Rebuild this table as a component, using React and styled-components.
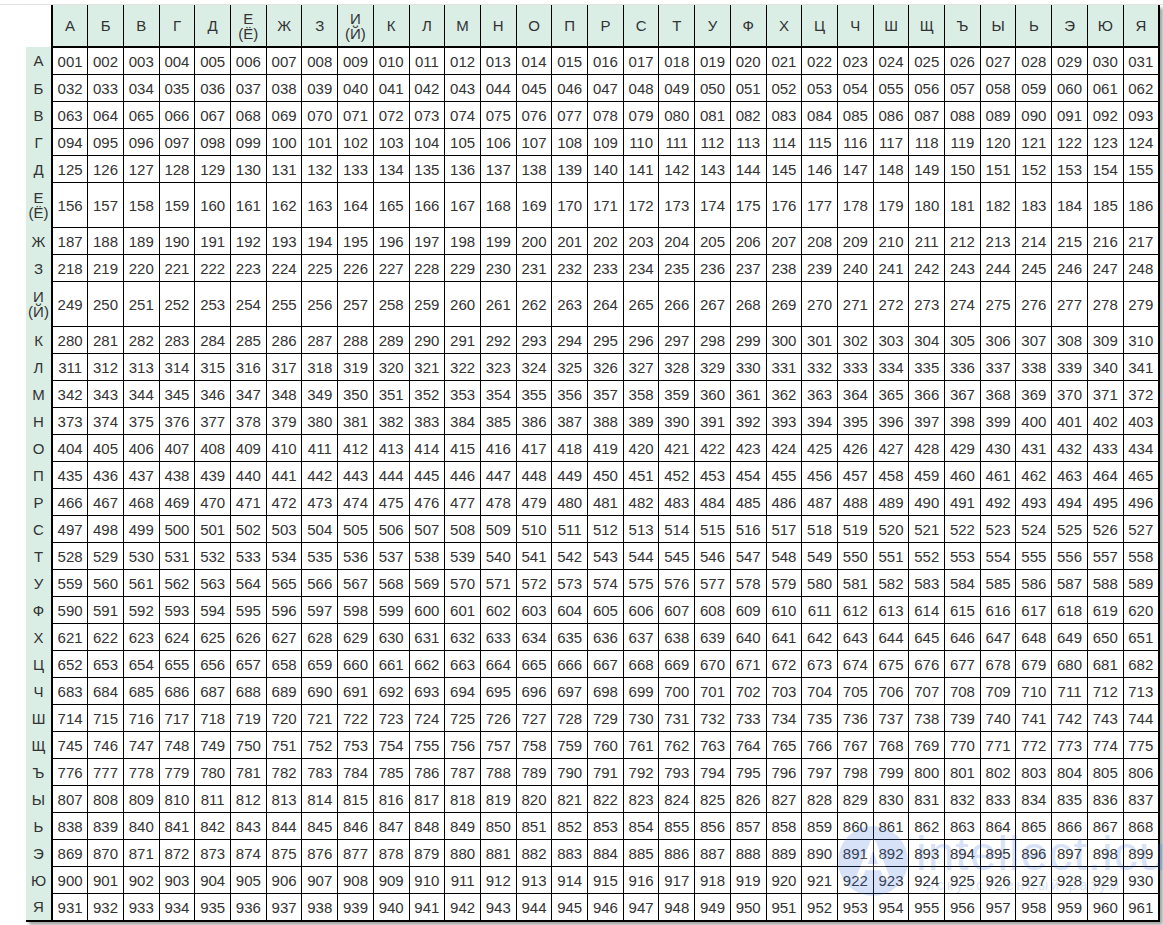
import React from 'react';
import styled, { createGlobalStyle } from 'styled-components';

const letters = ['А', 'Б', 'В', 'Г', 'Д', 'Е\n(Ё)', 'Ж', 'З', 'И\n(Й)', 'К', 'Л', 'М', 'Н', 'О', 'П', 'Р', 'С', 'Т', 'У', 'Ф', 'Х', 'Ц', 'Ч', 'Ш', 'Щ', 'Ъ', 'Ы', 'Ь', 'Э', 'Ю', 'Я'];

const GlobalStyle = createGlobalStyle`
  body {
    margin: 0;
    background: #fff;
    font-family: "Liberation Sans", Arial, sans-serif;
  }
`;

const Page = styled.div`
  position: relative;
  padding-top: 4px;
  width: 1163px;
  height: 925px;
  overflow: hidden;
`;

const Frame = styled.div`
  border-top: 1px solid #e2e2e2;
  padding-left: 26px;
`;

const Table = styled.table`
  border-collapse: collapse;
  table-layout: fixed;
  width: 1134px;
  box-shadow: 3px 3px 3px rgba(0, 0, 0, 0.35);
  color: #333;
  font-size: 15px;
`;

const HeadCell = styled.th`
  font-weight: normal;
  height: 41px;
  padding: 0;
  background: #daeee6;
  border-left: 1px solid #000;
  border-right: ${(p) => (p.$last ? '2px' : '1px')} solid #000;
  border-bottom: 2px solid #000;
  line-height: 15px;
  white-space: pre-line;
  text-align: center;
`;

const Corner = styled.th`
  width: 25px;
  padding: 0;
  background: #fff;
  border-right: 2px solid #000;
`;

const RowHead = styled.th`
  font-weight: normal;
  padding: 0;
  background: #daeee6;
  border-right: 2px solid #000;
  border-bottom: ${(p) => (p.$last ? '2px solid #000' : 'none')};
  line-height: 15px;
  white-space: pre-line;
  text-align: center;
`;

const Cell = styled.td`
  padding: 0;
  height: ${(p) => (p.$tall ? '44px' : '26px')};
  border: 1px solid #000;
  border-right-width: ${(p) => (p.$lastCol ? '2px' : '1px')};
  border-bottom-width: ${(p) => (p.$lastRow ? '2px' : '1px')};
  text-align: center;
  vertical-align: middle;
`;

const Watermark = styled.div`
  position: absolute;
  left: 836px;
  top: 824px;
  display: flex;
  align-items: center;
  gap: 6px;
  pointer-events: none;
  opacity: 0.2;
  color: #3b6fd8;
`;

const WmText = styled.div`
  display: flex;
  flex-direction: column;
  line-height: 1;
`;

const WmTitle = styled.span`
  font-family: "Liberation Sans", Arial, sans-serif;
  font-size: 48px;
  letter-spacing: 1px;
`;

const WmSub = styled.span`
  font-family: "Liberation Sans", Arial, sans-serif;
  font-size: 14px;
  letter-spacing: 3px;
  padding-left: 10px;
`;

const pad = (n) => String(n).padStart(3, '0');

export default function App() {
  return (
    <Page>
      <GlobalStyle />
      <Frame>
        <Table>
          <colgroup>
            <col style={{ width: 26 }} />
            {letters.map((l, i) => <col key={i} />)}
          </colgroup>
          <thead>
            <tr>
              <Corner />
              {letters.map((l, i) => (
                <HeadCell key={i} $last={i === letters.length - 1}>{l}</HeadCell>
              ))}
            </tr>
          </thead>
          <tbody>
            {letters.map((rowL, r) => {
              const tall = rowL.includes('\n');
              const lastRow = r === letters.length - 1;
              return (
                <tr key={r}>
                  <RowHead $last={lastRow}>{rowL}</RowHead>
                  {letters.map((c, j) => (
                    <Cell key={j} $tall={tall} $lastRow={lastRow} $lastCol={j === letters.length - 1}>
                      {pad(r * 31 + j + 1)}
                    </Cell>
                  ))}
                </tr>
              );
            })}
          </tbody>
        </Table>
      </Frame>
      <Watermark>
        <svg width="74" height="74" viewBox="0 0 72 72">
          <circle cx="36" cy="36" r="34" fill="#3b6fd8" />
          <path d="M22 54 L36 18 L50 54 M28 42 L44 42" stroke="#fff" strokeWidth="6" fill="none" strokeLinejoin="round" />
        </svg>
        <WmText>
          <WmTitle>intellect.icu</WmTitle>
          <WmSub>искусственный разум</WmSub>
        </WmText>
      </Watermark>
    </Page>
  );
}
